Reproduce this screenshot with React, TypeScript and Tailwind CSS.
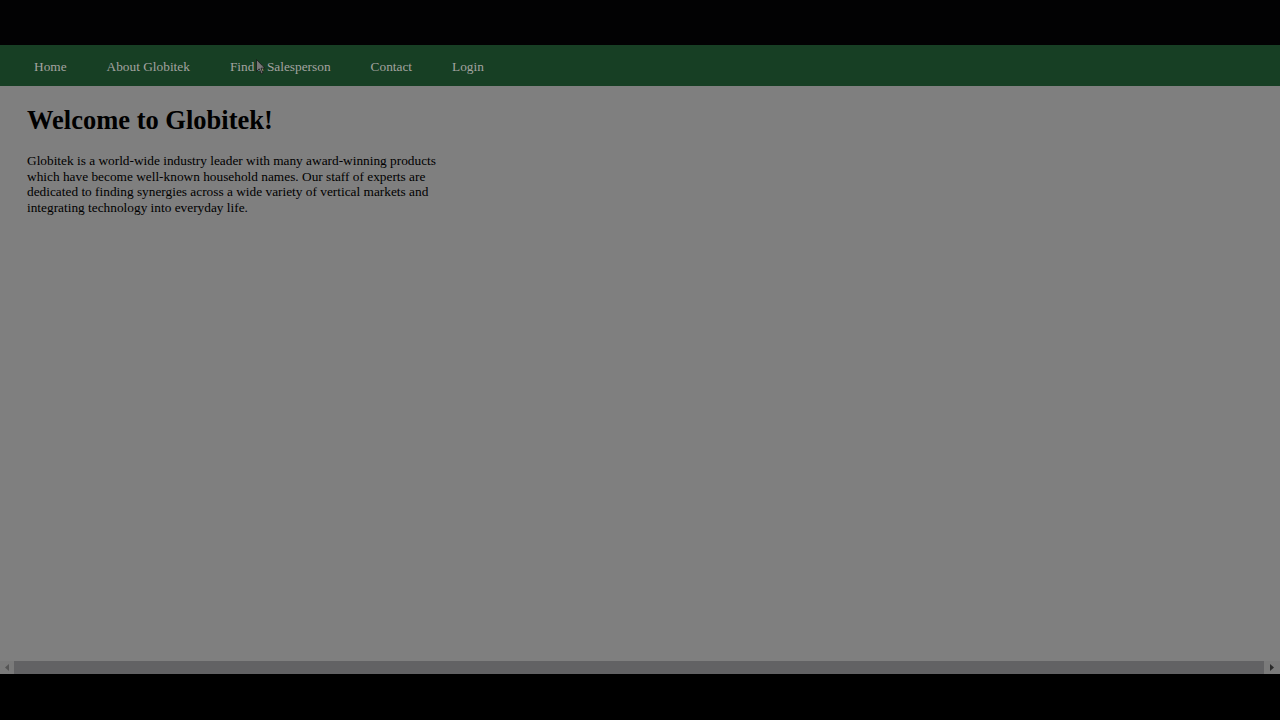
export default function App() {
  const links = ["Home", "About Globitek", "Find a Salesperson", "Contact", "Login"];

  return (
    <div className="flex h-[720px] w-[1280px] flex-col bg-black font-['Liberation_Serif',serif]">
      <div className="h-[45px] shrink-0 bg-[#020203]" />
      <div className="relative flex min-h-0 flex-1 flex-col bg-[#7f7f7f]">
        <nav className="flex h-[41px] shrink-0 items-center bg-[#173f24] pl-[14px] pt-[3px]">
          {links.map((l) => (
            <a key={l} className="px-[20px] text-[13.33px] text-[#a3a3a0]">
              {l}
            </a>
          ))}
        </nav>
        <main className="flex-1 px-[27px]">
          <h1 className="mt-[19px] text-[26.5px] font-bold leading-[30px] text-black">
            Welcome to Globitek!
          </h1>
          <p className="mt-[18px] w-[420px] text-[13.33px] leading-[15.6px] text-black">
            Globitek is a world-wide industry leader with many award-winning products which have
            become well-known household names. Our staff of experts are dedicated to finding
            synergies across a wide variety of vertical markets and integrating technology into
            everyday life.
          </p>
        </main>
        <div className="flex h-[13px] shrink-0 items-center bg-[#7a7a7a]">
          <div className="flex w-[14px] items-center justify-center">
            <svg width="4" height="7" viewBox="0 0 4 7">
              <path d="M4 0 L0 3.5 L4 7 Z" fill="#555" />
            </svg>
          </div>
          <div className="h-[13px] flex-1 bg-[#626264]" />
          <div className="flex w-[16px] items-center justify-center">
            <svg width="4" height="7" viewBox="0 0 4 7">
              <path d="M0 0 L4 3.5 L0 7 Z" fill="#2a2a2a" />
            </svg>
          </div>
        </div>
        <svg
          className="absolute left-[256px] top-[14px]"
          width="10"
          height="16"
          viewBox="0 0 10 16"
        >
          <path d="M0.5 0.5 L0.5 12.5 L3.2 9.8 L5.3 14.8 L7 14 L5 9.2 L8.8 9.2 Z" fill="#777" stroke="#111" strokeWidth="0.7" />
        </svg>
      </div>
      <div className="h-[46px] shrink-0 bg-black" />
    </div>
  );
}
